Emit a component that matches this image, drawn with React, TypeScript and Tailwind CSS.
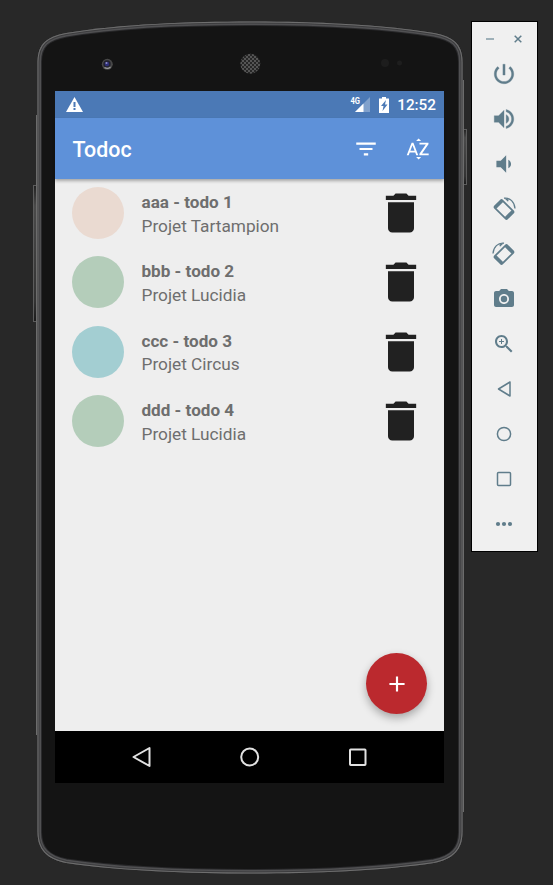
import React from "react";

type Glyph = { d: string; size?: number; className?: string };

function Icon({ d, size = 24, className = "" }: Glyph) {
  return (
    <svg width={size} height={size} viewBox="0 0 24 24" fill="currentColor" className={`shrink-0 ${className}`}>
      <path d={d} />
    </svg>
  );
}

const TRASH = "M6 19c0 1.1.9 2 2 2h8c1.1 0 2-.9 2-2V7H6v12zM19 4h-3.5l-1-1h-5l-1 1H5v2h14V4z";
const POWER =
  "M13 3h-2v10h2V3zm4.83 2.17l-1.42 1.42C17.99 7.86 19 9.81 19 12c0 3.87-3.13 7-7 7s-7-3.13-7-7c0-2.19 1.01-4.14 2.58-5.42L6.17 5.17C4.23 6.82 3 9.26 3 12c0 4.97 4.03 9 9 9s9-4.03 9-9c0-2.74-1.23-5.18-3.17-6.83z";
const VOLUME_UP =
  "M3 9v6h4l5 5V4L7 9H3zm13.5 3c0-1.77-1.02-3.29-2.5-4.03v8.05c1.48-.73 2.5-2.25 2.5-4.02zM14 3.23v2.06c2.89.86 5 3.54 5 6.71s-2.11 5.85-5 6.71v2.06c4.01-.91 7-4.49 7-8.77s-2.99-7.86-7-8.77z";
const VOLUME_DOWN = "M18.5 12c0-1.77-1.02-3.29-2.5-4.03v8.05c1.48-.73 2.5-2.25 2.5-4.02zM5 9v6h4l5 5V4L9 9H5z";
const CAMERA =
  "M12 8.8a3.2 3.2 0 1 0 0 6.4 3.2 3.2 0 0 0 0-6.4zM9 2L7.17 4H4c-1.1 0-2 .9-2 2v12c0 1.1.9 2 2 2h16c1.1 0 2-.9 2-2V6c0-1.1-.9-2-2-2h-3.17L15 2H9zm3 15c-2.76 0-5-2.24-5-5s2.24-5 5-5 5 2.24 5 5-2.24 5-5 5z";
const ZOOM_IN =
  "M15.5 14h-.79l-.28-.27C15.41 12.59 16 11.11 16 9.5 16 5.91 13.09 3 9.5 3S3 5.91 3 9.5 5.91 16 9.5 16c1.61 0 3.09-.59 4.23-1.57l.27.28v.79l5 4.99L20.49 19l-4.99-5zm-6 0C7.01 14 5 11.99 5 9.5S7.01 5 9.5 5 14 7.01 14 9.5 11.99 14 9.5 14zm2.5-4h-2v2H9v-2H7V9h2V7h1v2h2v1z";

const tasks = [
  { name: "aaa - todo 1", project: "Projet Tartampion", color: "bg-[#eadad1]" },
  { name: "bbb - todo 2", project: "Projet Lucidia", color: "bg-[#b4cdba]" },
  { name: "ccc - todo 3", project: "Projet Circus", color: "bg-[#a3ced2]" },
  { name: "ddd - todo 4", project: "Projet Lucidia", color: "bg-[#b4cdba]" },
];

const BODY =
  "M37.5 62C37.5 44 47 36.5 66 33C120 24 190 21.5 250 21.5S380 24 434 33C453 36.5 462.500 44 462.500 62V832C462.500 850 453 859 434 863C380 871 310 873.500 250 873.500S120 871 66 863C47 859 37.5 850 37.5 832Z";

function PhoneShell() {
  return (
    <svg width="472" height="885" className="absolute top-0 left-0 -z-10" fill="none">
      <defs>
        <pattern id="mesh" width="4" height="4" patternUnits="userSpaceOnUse">
          <rect width="4" height="4" fill="#555" />
          <circle cx="1" cy="1" r="1" fill="#171717" />
          <circle cx="3" cy="3" r="1" fill="#171717" />
        </pattern>
        <linearGradient id="key" x1="0" y1="0" x2="0" y2="1">
          <stop offset="0" stopColor="#222" />
          <stop offset="0.15" stopColor="#4a4a4a" />
          <stop offset="0.85" stopColor="#333" />
          <stop offset="1" stopColor="#1a1a1a" />
        </linearGradient>
        <clipPath id="body"><path d={BODY} /></clipPath>
      </defs>
      <rect x="33.500" y="185.500" width="5" height="136" fill="url(#key)" stroke="#5c5c5c" />
      <rect x="462" y="129.500" width="4.500" height="55" fill="url(#key)" stroke="#5c5c5c" />
      <path d="M36.500 115V735M463.500 80V812" stroke="#6c6c6c" />
      <path d={BODY} fill="#141414" />
      <g clipPath="url(#body)">
        <path d={BODY} stroke="#2a2a2c" strokeWidth="9" />
        <path d={BODY} stroke="#505052" strokeWidth="7" />
        <path d={BODY} stroke="#3c3c3e" strokeWidth="4" />
        <path d={BODY} stroke="#6e6e6e" strokeWidth="2" />
      </g>
      <circle cx="107.300" cy="64.300" r="5.500" fill="#484848" />
      <circle cx="107" cy="64" r="3.700" fill="#22222c" />
      <circle cx="107" cy="64" r="2.300" fill="#2e2e78" />
      <circle cx="106.500" cy="63" r="1" fill="#8f8fc4" />
      <path d="M104.500 67.500Q107.500 69.500 110.500 67" stroke="#999" strokeWidth="1.300" />
      <circle cx="250.300" cy="63.700" r="10" fill="url(#mesh)" />
      <circle cx="385" cy="63" r="4" fill="#1d1d1d" />
      <circle cx="399.500" cy="63" r="2.500" fill="#1e1e1e" />
    </svg>
  );
}

function StatusBar() {
  return (
    <div className="flex h-[27px] items-center bg-[#4b79b6] pr-[8px] pl-[11px] text-white">
      <svg width="17" height="15" viewBox="0 0 17 15">
        <path d="M8.500 0L17 15H0Z" fill="white" />
        <path d="M7.500 5h2v5h-2zM7.500 11h2v2h-2z" fill="#4b79b6" />
      </svg>
      <svg width="21" height="17" viewBox="0 0 21 17" className="ml-auto">
        <text x="0.500" y="8" fontSize="9" fontWeight="700" fontFamily="Roboto, sans-serif" textLength="9.500" lengthAdjust="spacingAndGlyphs" fill="white">4G</text>
        <path d="M20 1V16H5Z" fill="white" fillOpacity=".3" />
        <path d="M13.500 7.500V16H5Z" fill="white" />
      </svg>
      <svg width="10" height="16" viewBox="0 0 10 16" className="ml-[8px]">
        <path d="M3 0h4v1.500h3V16H0V1.500h3z" fill="white" />
        <path d="M7 3L2 9h2.500L3.500 14 8.500 7.500H6z" fill="#4b79b6" />
      </svg>
      <span className="ml-[8px] pt-[2px] text-[15.3px] leading-none font-medium">12:52</span>
    </div>
  );
}

function AppBar() {
  return (
    <div className="relative flex h-[61px] items-center bg-[#5e91d9] pr-[13px] pl-[17.5px] text-white shadow-[0_2px_3px_rgba(0,0,0,0.3)]">
      <h1 className="pt-[2px] text-[21.4px] leading-none font-medium">Todoc</h1>
      <Icon size={26} className="ml-auto" d="M10 18h4v-2h-4v2zM3 6v2h18V6H3zm3 7h12v-2H6v2z" />
      <Icon
        size={26}
        className="ml-[26px]"
        d="M14.940 4.660h-4.720l2.360-2.360zm-4.690 14.710h4.660l-2.330 2.330zM6.100 6.270L1.600 17.730h1.840l.920-2.450h5.110l.920 2.450h1.840L7.740 6.270H6.100zm-1.130 7.370l1.940-5.180 1.940 5.180H4.970zm10.760 2.500h6.120v1.590h-8.530v-1.290l5.920-8.560h-5.880v-1.600h8.300v1.260l-5.930 8.600z"
      />
    </div>
  );
}

function NavBar() {
  return (
    <div className="flex h-[52px] items-center justify-center gap-[84px] bg-black text-[#e2e2e2]">
      <svg width="24" height="24" fill="none" stroke="currentColor" strokeWidth="2" strokeLinejoin="round">
        <path d="M19.500 3v18L3.500 12Z" />
      </svg>
      <svg width="24" height="24" fill="none" stroke="currentColor" strokeWidth="2"><circle cx="11.700" cy="12" r="8.500" /></svg>
      <svg width="24" height="24" fill="none" stroke="currentColor" strokeWidth="2"><rect x="4" y="4.500" width="15.500" height="15.500" rx="0.700" /></svg>
    </div>
  );
}

function Rotate({ mirrored = false }: { mirrored?: boolean }) {
  return (
    <svg width="24" height="24" viewBox="0 0 24 24" className={mirrored ? "-scale-x-100" : ""} fill="none" stroke="currentColor">
      <g transform="rotate(-45 12 12.500)">
        <rect x="6.700" y="3.800" width="10.600" height="17.400" rx="1" strokeWidth="1.700" />
        <path d="M7 4.900h10M7 20.100h10" strokeWidth="3.400" />
      </g>
      <path d="M12 1.200C18 .5 22.600 5 23 11.500" strokeWidth="1.300" />
      <path d="M12 1l4 3.800 .8-2.400z" fill="currentColor" stroke="none" />
    </svg>
  );
}

function EmulatorTools() {
  return (
    <aside className="mt-[21px] flex h-[531px] w-[67px] flex-col items-center border border-black bg-[#f0f0f0] pr-[2px] text-[#607d8b]">
      <div className="flex h-[34px] w-full items-center justify-center gap-[20px]">
        <svg width="8" height="8" stroke="#9eb0b8" strokeWidth="2"><path d="M0 4h8" /></svg>
        <svg width="8" height="8" stroke="currentColor" strokeWidth="1.500"><path d="M.7.7l6.600 6.600M7.300.7L.7 7.300" /></svg>
      </div>
      <div className="-mt-[5px] flex flex-col items-center">
        {[
          <Icon key="power" d={POWER} size={26} className="stroke-current stroke-[0.3]" />,
          <Icon key="up" d={VOLUME_UP} size={26} className="stroke-current stroke-[0.3]" />,
          <Icon key="down" d={VOLUME_DOWN} size={26} />,
          <Rotate key="left" />,
          <Rotate key="right" mirrored />,
          <Icon key="camera" d={CAMERA} size={24} />,
          <Icon key="zoom" d={ZOOM_IN} size={24} />,
          <svg key="back" width="24" height="24" fill="none" stroke="currentColor" strokeWidth="1.500" strokeLinejoin="round"><path d="M18 5v14L6.500 12Z" /></svg>,
          <svg key="home" width="24" height="24" fill="none" stroke="currentColor" strokeWidth="1.500"><circle cx="12" cy="12" r="6.600" /></svg>,
          <svg key="recent" width="24" height="24" fill="none" stroke="currentColor" strokeWidth="1.500"><rect x="5.500" y="5.500" width="13" height="13" rx="1" /></svg>,
          <svg key="more" width="24" height="24" fill="currentColor"><circle cx="6" cy="12" r="2.100" /><circle cx="12" cy="12" r="2.100" /><circle cx="18" cy="12" r="2.100" /></svg>,
        ].map((icon, i) => (
          <div key={i} className="flex h-[45px] items-center justify-center">{icon}</div>
        ))}
      </div>
    </aside>
  );
}

export default function App() {
  return (
    <div className="relative isolate flex h-[885px] w-[553px] items-start overflow-hidden bg-[#282828] font-['Roboto',sans-serif]">
      <PhoneShell />
      <main className="mt-[91px] mr-[27px] ml-[55px] flex h-[692px] w-[389px] shrink-0 flex-col bg-[#eeeeee]">
        <StatusBar />
        <AppBar />
        <section className="relative flex-1">
          <ul className="-mt-[0.7px]">
            {tasks.map((task) => (
              <li key={task.name} className="flex h-[69.4px] items-center pr-[17px] pl-[17px]">
                <span className={`size-[52px] rounded-full ${task.color}`} />
                <div className="ml-[17.5px] pt-[3px] text-[17.25px] leading-[23.500px] text-[#6e6e6e]">
                  <p className="text-[17.1px] font-bold">{task.name}</p>
                  <p>{task.project}</p>
                </div>
                <Icon d={TRASH} size={52} className="ml-auto text-[#212121]" />
              </li>
            ))}
          </ul>
          <button className="absolute right-[17px] bottom-[17px] flex size-[61px] items-center justify-center rounded-full bg-[#bb292e] text-white shadow-[0_4px_8px_rgba(0,0,0,0.3)]">
            <Icon d="M19 13h-6v6h-2v-6H5v-2h6V5h2v6h6v2z" size={26} />
          </button>
        </section>
        <NavBar />
      </main>
      <EmulatorTools />
    </div>
  );
}
